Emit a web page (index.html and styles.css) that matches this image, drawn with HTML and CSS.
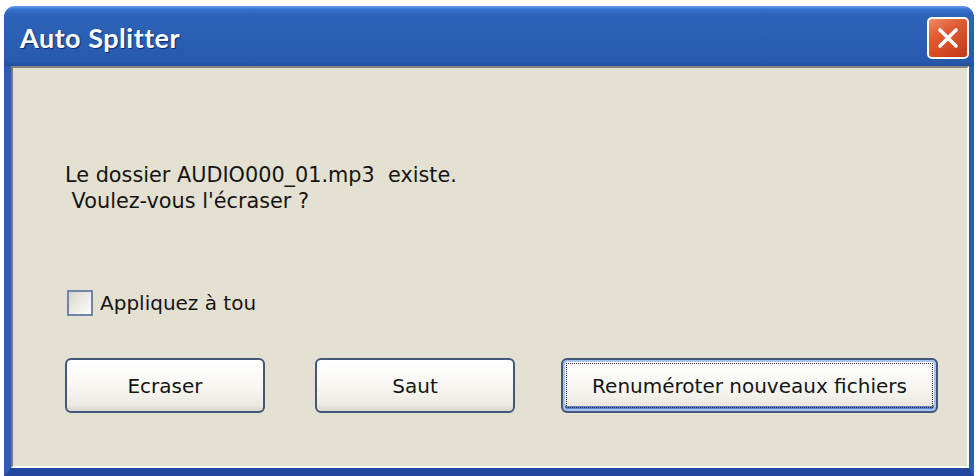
FILE: index.html
```html
<!DOCTYPE html>
<html lang="fr">
<head>
    <meta charset="UTF-8">
    <meta name="viewport" content="width=device-width, initial-scale=1.0">
    <title>Auto Splitter</title>
    <link rel="stylesheet" href="styles.css">
</head>
<body>
    <div class="window">
        <div class="titlebar">
            <span class="title">Auto Splitter</span>
            <button class="close" type="button" aria-label="Fermer">
                <svg width="38" height="38" viewBox="0 0 38 38">
                    <path d="M11 11 L27 27 M27 11 L11 27" stroke="#fff" stroke-width="3.6" stroke-linecap="round"/>
                </svg>
            </button>
        </div>
        <div class="frame">
            <div class="client">
                <p class="message">Le dossier AUDIO000_01.mp3&nbsp; existe.<br>&nbsp;Voulez-vous l'écraser ?</p>

                <label class="check">
                    <span class="box"></span>
                    Appliquez à tou
                </label>

                <div class="buttons">
                    <button class="btn btn-ecraser" type="button">Ecraser</button>
                    <button class="btn btn-saut" type="button">Saut</button>
                    <button class="btn btn-renum default" type="button"><span class="focus">Renuméroter nouveaux fichiers</span></button>
                </div>
            </div>
        </div>
    </div>
</body>
</html>
```

FILE: styles.css
```css
body {
    margin: 0;
    background-color: #fff;
    font-family: "DejaVu Sans", Verdana, sans-serif;
    color: #141414;
}

.window {
    margin: 6px 0 0 4px;
    width: 970px;
    height: 470px;
    display: flex;
    flex-direction: column;
}

.titlebar {
    height: 60px;
    flex: none;
    display: flex;
    justify-content: space-between;
    align-items: flex-start;
    padding: 0 5px 0 16px;
    border-radius: 11px 11px 0 0;
    background: linear-gradient(#6a9cec 0, #3a74d4 3px, #2d63bb 8px, #2b5fb3 50%, #285aac 92%, #23509e 100%);
}

.title {
    margin-top: 16px;
    color: #fff;
    font-family: Lato, "DejaVu Sans", sans-serif;
    font-weight: bold;
    font-size: 27px;
    line-height: 32px;
    letter-spacing: 0.5px;
    text-shadow: 1px 1px 1px #0c2a70;
}

.close {
    margin-top: 11px;
    width: 42px;
    height: 42px;
    padding: 0;
    border: 2px solid #fff;
    border-radius: 5px;
    background: linear-gradient(150deg, #ef8b68 0, #e05c34 35%, #cf4520 75%, #bb391a 100%);
    display: flex;
    align-items: center;
    justify-content: center;
}

.frame {
    flex: 1;
    display: flex;
    border-left: 7px solid #2c5db2;
    border-right: 5px solid #2c5db2;
    border-bottom: 8px solid #22479c;
}

.client {
    flex: 1;
    background-color: #e5e1d2;
    border: 2px solid;
    border-color: #88867a #fbfbf8 #fbfbf8 #7d7a70;
    padding-left: 52px;
}

.message {
    margin: 94px 0 0 0;
    font-size: 20.8px;
    line-height: 26px;
}

.check {
    margin-top: 76px;
    margin-left: 2px;
    display: flex;
    align-items: center;
    gap: 7px;
    font-size: 20px;
}

.box {
    width: 22px;
    height: 22px;
    border: 2px solid #6f84a8;
    background: linear-gradient(135deg, #d6d5cc 0, #ecebe6 50%, #fdfdfb 100%);
}

.buttons {
    margin-top: 42px;
    display: flex;
}

.btn {
    height: 55px;
    padding: 0;
    border: 2px solid #43567c;
    border-radius: 6px;
    background: linear-gradient(#ffffff 0, #f7f6f2 55%, #ebe9e1 88%, #d9d6ca 100%);
    font-family: "DejaVu Sans", Verdana, sans-serif;
    font-size: 20px;
    color: #141414;
}

.btn-ecraser {
    width: 200px;
}

.btn-saut {
    width: 200px;
    margin-left: 50px;
}

.btn-renum {
    width: 377px;
    margin-left: 46px;
}

.default {
    display: flex;
    box-shadow: inset 0 0 0 2px #a6c2ee, inset 0 -3px 0 2px #5f82cf;
}

.focus {
    flex: 1;
    margin: 3px;
    border: 1px dotted #2a2a2a;
    display: flex;
    align-items: center;
    justify-content: center;
}
```
